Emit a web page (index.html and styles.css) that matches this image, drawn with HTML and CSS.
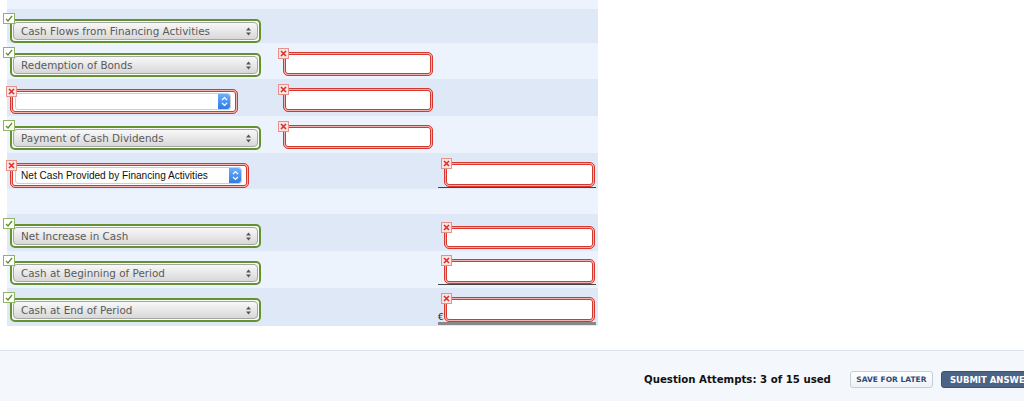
FILE: index.html
```html
<!DOCTYPE html>
<html>
<head>
<meta charset="utf-8">
<link rel="stylesheet" href="styles.css">
</head>
<body>
<table class="sheet">
  <colgroup><col class="w1"><col class="w2"><col class="w3"></colgroup>
  <tr class="lite h9"><td></td><td></td><td></td></tr>
  <tr class="dark h34">
    <td class="c1"><div class="field ok">
      <span class="badge okb"><svg width="8" height="7" viewBox="0 0 8 7"><path d="M1 4 L3 6 L7 1" fill="none" stroke="#5f8f2c" stroke-width="1.3"/></svg></span>
      <div class="gsel"><span>Cash Flows from Financing Activities</span><svg width="5" height="9" viewBox="0 0 5 9"><polygon points="0,3.5 2.5,0.5 5,3.5" fill="#555"/><polygon points="0,5.5 2.5,8.5 5,5.5" fill="#555"/></svg></div>
    </div></td>
    <td></td><td></td>
  </tr>
  <tr class="lite h36">
    <td class="c1"><div class="field ok">
      <span class="badge okb"><svg width="8" height="7" viewBox="0 0 8 7"><path d="M1 4 L3 6 L7 1" fill="none" stroke="#5f8f2c" stroke-width="1.3"/></svg></span>
      <div class="gsel"><span>Redemption of Bonds</span><svg width="5" height="9" viewBox="0 0 5 9"><polygon points="0,3.5 2.5,0.5 5,3.5" fill="#555"/><polygon points="0,5.5 2.5,8.5 5,5.5" fill="#555"/></svg></div>
    </div></td>
    <td class="c2"><div class="field bad inp">
      <span class="badge badb b2"><svg width="7" height="7" viewBox="0 0 7 7"><path d="M1 1 L6 6 M6 1 L1 6" stroke="#d8302a" stroke-width="1.6"/></svg></span>
      <div class="bad-inner"></div>
    </div></td>
    <td></td>
  </tr>
  <tr class="dark h37">
    <td class="c1"><div class="field bad sel1">
      <span class="badge badb b1"><svg width="7" height="7" viewBox="0 0 7 7"><path d="M1 1 L6 6 M6 1 L1 6" stroke="#d8302a" stroke-width="1.6"/></svg></span>
      <div class="bad-inner pad"><div class="wsel"><span></span><span class="bbtn"><svg width="7" height="11" viewBox="0 0 7 11"><path d="M1 4 L3.5 1.5 L6 4 M1 7 L3.5 9.5 L6 7" fill="none" stroke="#fff" stroke-width="1.2"/></svg></span></div></div>
    </div></td>
    <td class="c2"><div class="field bad inp">
      <span class="badge badb b2"><svg width="7" height="7" viewBox="0 0 7 7"><path d="M1 1 L6 6 M6 1 L1 6" stroke="#d8302a" stroke-width="1.6"/></svg></span>
      <div class="bad-inner"></div>
    </div></td>
    <td></td>
  </tr>
  <tr class="lite h37">
    <td class="c1"><div class="field ok">
      <span class="badge okb"><svg width="8" height="7" viewBox="0 0 8 7"><path d="M1 4 L3 6 L7 1" fill="none" stroke="#5f8f2c" stroke-width="1.3"/></svg></span>
      <div class="gsel"><span>Payment of Cash Dividends</span><svg width="5" height="9" viewBox="0 0 5 9"><polygon points="0,3.5 2.5,0.5 5,3.5" fill="#555"/><polygon points="0,5.5 2.5,8.5 5,5.5" fill="#555"/></svg></div>
    </div></td>
    <td class="c2"><div class="field bad inp">
      <span class="badge badb b2"><svg width="7" height="7" viewBox="0 0 7 7"><path d="M1 1 L6 6 M6 1 L1 6" stroke="#d8302a" stroke-width="1.6"/></svg></span>
      <div class="bad-inner"></div>
    </div></td>
    <td></td>
  </tr>
  <tr class="dark h36">
    <td class="c1"><div class="field bad sel2">
      <span class="badge badb b1"><svg width="7" height="7" viewBox="0 0 7 7"><path d="M1 1 L6 6 M6 1 L1 6" stroke="#d8302a" stroke-width="1.6"/></svg></span>
      <div class="bad-inner pad"><div class="wsel"><span class="wtext">Net Cash Provided by Financing Activities</span><span class="bbtn"><svg width="7" height="11" viewBox="0 0 7 11"><path d="M1 4 L3.5 1.5 L6 4 M1 7 L3.5 9.5 L6 7" fill="none" stroke="#fff" stroke-width="1.2"/></svg></span></div></div>
    </div></td>
    <td></td>
    <td class="c3"><div class="tot single"><span class="cur"></span><div class="field bad inp3">
      <span class="badge badb b3"><svg width="7" height="7" viewBox="0 0 7 7"><path d="M1 1 L6 6 M6 1 L1 6" stroke="#d8302a" stroke-width="1.6"/></svg></span>
      <div class="bad-inner"></div>
    </div></div></td>
  </tr>
  <tr class="lite h25"><td></td><td></td><td></td></tr>
  <tr class="dark h37">
    <td class="c1"><div class="field ok">
      <span class="badge okb"><svg width="8" height="7" viewBox="0 0 8 7"><path d="M1 4 L3 6 L7 1" fill="none" stroke="#5f8f2c" stroke-width="1.3"/></svg></span>
      <div class="gsel"><span>Net Increase in Cash</span><svg width="5" height="9" viewBox="0 0 5 9"><polygon points="0,3.5 2.5,0.5 5,3.5" fill="#555"/><polygon points="0,5.5 2.5,8.5 5,5.5" fill="#555"/></svg></div>
    </div></td>
    <td></td>
    <td class="c3 pt12"><div class="tot"><span class="cur"></span><div class="field bad inp3 short">
      <span class="badge badb b3"><svg width="7" height="7" viewBox="0 0 7 7"><path d="M1 1 L6 6 M6 1 L1 6" stroke="#d8302a" stroke-width="1.6"/></svg></span>
      <div class="bad-inner"></div>
    </div></div></td>
  </tr>
  <tr class="lite h37">
    <td class="c1"><div class="field ok">
      <span class="badge okb"><svg width="8" height="7" viewBox="0 0 8 7"><path d="M1 4 L3 6 L7 1" fill="none" stroke="#5f8f2c" stroke-width="1.3"/></svg></span>
      <div class="gsel"><span>Cash at Beginning of Period</span><svg width="5" height="9" viewBox="0 0 5 9"><polygon points="0,3.5 2.5,0.5 5,3.5" fill="#555"/><polygon points="0,5.5 2.5,8.5 5,5.5" fill="#555"/></svg></div>
    </div></td>
    <td></td>
    <td class="c3 pt8"><div class="tot single"><span class="cur"></span><div class="field bad inp3">
      <span class="badge badb b3"><svg width="7" height="7" viewBox="0 0 7 7"><path d="M1 1 L6 6 M6 1 L1 6" stroke="#d8302a" stroke-width="1.6"/></svg></span>
      <div class="bad-inner"></div>
    </div></div></td>
  </tr>
  <tr class="dark h38">
    <td class="c1"><div class="field ok">
      <span class="badge okb"><svg width="8" height="7" viewBox="0 0 8 7"><path d="M1 4 L3 6 L7 1" fill="none" stroke="#5f8f2c" stroke-width="1.3"/></svg></span>
      <div class="gsel"><span>Cash at End of Period</span><svg width="5" height="9" viewBox="0 0 5 9"><polygon points="0,3.5 2.5,0.5 5,3.5" fill="#555"/><polygon points="0,5.5 2.5,8.5 5,5.5" fill="#555"/></svg></div>
    </div></td>
    <td></td>
    <td class="c3"><div class="tot double"><span class="cur">€</span><div class="field bad inp3">
      <span class="badge badb b3"><svg width="7" height="7" viewBox="0 0 7 7"><path d="M1 1 L6 6 M6 1 L1 6" stroke="#d8302a" stroke-width="1.6"/></svg></span>
      <div class="bad-inner"></div>
    </div></div></td>
  </tr>
</table>
<div class="gap"></div>
<div class="footer">
  <span class="attempts">Question Attempts: 3 of 15 used</span>
  <span class="btn-save">SAVE FOR LATER</span>
  <span class="btn-submit">SUBMIT ANSWER</span>
</div>
</body>
</html>
```
FILE: styles.css
```css
body {
  margin: 0;
  background: #fff;
  font-family: "DejaVu Sans", Verdana, sans-serif;
}
.sheet {
  margin-left: 7px;
  width: 591px;
  border-collapse: collapse;
  table-layout: fixed;
}
.w1 { width: 268px; }
.w2 { width: 162px; }
.w3 { width: 161px; }
.sheet td { padding: 0; vertical-align: top; }
.dark td { background: #dee8f6; }
.lite td { background: #ecf3fd; }
.h9 { height: 9px; }
.h25 { height: 25px; }
.h34 { height: 34px; }
.h36 { height: 36px; }
.h37 { height: 37px; }
.h38 { height: 38px; }

.sheet .c1 { padding: 10px 0 0 3px; }
.sheet .c2 { padding: 9px 0 0 8px; }
.sheet .c3 { padding: 9px 0 0 1px; }
.sheet .pt12 { padding-top: 12px; }
.sheet .pt8 { padding-top: 8px; }

.field {
  position: relative;
  box-sizing: border-box;
  height: 24px;
}
.field.ok {
  width: 251px;
  border: 2px solid #64922f;
  border-radius: 5px;
  padding: 1px;
  background: #fbfdf8;
}
.gsel {
  box-sizing: border-box;
  height: 18px;
  border: 1px solid #a5a5a5;
  border-radius: 4px;
  background: linear-gradient(#f8f8f8, #d8d8d8);
  display: flex;
  align-items: center;
  justify-content: space-between;
  padding: 0 6px 0 7px;
  font-size: 10.4px;
  color: #5a5a5a;
}
.field.bad {
  border: 1px solid #d8372d;
  border-radius: 5px;
  padding: 1px;
  background: #f4b3ae;
}
.bad-inner {
  box-sizing: border-box;
  height: 100%;
  border: 1px solid #d8372d;
  border-radius: 3px;
  background: #fff;
}
.bad-inner.pad { padding: 1px 4px 1px 2px; }
.sel1 { width: 228px; height: 25px; }
.sel2 { width: 239px; height: 25px; }
.inp { width: 150px; }
.inp3 { width: 151px; height: 25px; }
.inp3.short { height: 23px; }

.wsel {
  box-sizing: border-box;
  height: 100%;
  border: 1px solid #cdcdcd;
  border-radius: 3px;
  background: #fff;
  display: flex;
  align-items: stretch;
  justify-content: space-between;
}
.wtext {
  font-family: "Liberation Sans", Arial, sans-serif;
  font-size: 10.1px;
  color: #111;
  padding-left: 5px;
  display: flex;
  align-items: center;
}
.bbtn {
  width: 12px;
  background: linear-gradient(#6caef8, #2d7be8);
  border-radius: 0 3px 3px 0;
  display: flex;
  align-items: center;
  justify-content: center;
}

.badge {
  position: absolute;
  box-sizing: border-box;
  width: 12px;
  height: 11px;
  display: flex;
  align-items: center;
  justify-content: center;
}
.okb {
  left: -9px;
  top: -8px;
  background: #fff;
  border: 1px solid #8db563;
}
.badb {
  width: 11px;
  background: #fde3e1;
  border: 1px solid #e6928c;
}
.b1 { left: -5px; top: -4px; }
.b2 { left: -6px; top: -5px; }
.b3 { left: -4px; top: -5px; }

.tot {
  width: 158px;
  display: flex;
  align-items: flex-end;
}
.tot.single { border-bottom: 1px solid #444; }
.tot.double { border-bottom: 3px solid #888; }
.cur {
  width: 6px;
  font-size: 9px;
  line-height: 10px;
  color: #222;
  flex-shrink: 0;
}

.gap { height: 24px; }
.footer {
  box-sizing: border-box;
  height: 51px;
  border-top: 1px solid #dde3ea;
  background: #f4f7fb;
  display: flex;
  align-items: center;
  padding: 7px 0 0 644px;
  overflow: hidden;
  white-space: nowrap;
}
.attempts {
  font-weight: bold;
  font-size: 10.2px;
  color: #111;
  margin-right: 19px;
  flex-shrink: 0;
}
.btn-save {
  box-sizing: border-box;
  width: 83px;
  height: 17px;
  border: 1px solid #c5ceda;
  border-radius: 3px;
  background: linear-gradient(#ffffff, #eef2f6);
  color: #2e4a78;
  font-size: 7.5px;
  font-weight: bold;
  display: flex;
  align-items: center;
  justify-content: center;
  margin-right: 8px;
  flex-shrink: 0;
}
.btn-submit {
  box-sizing: border-box;
  height: 17px;
  border: 1px solid #3b5170;
  border-radius: 3px;
  background: #4b6385;
  color: #fff;
  font-size: 8.5px;
  font-weight: bold;
  display: flex;
  align-items: center;
  padding: 0 8px;
  flex-shrink: 0;
}
```
